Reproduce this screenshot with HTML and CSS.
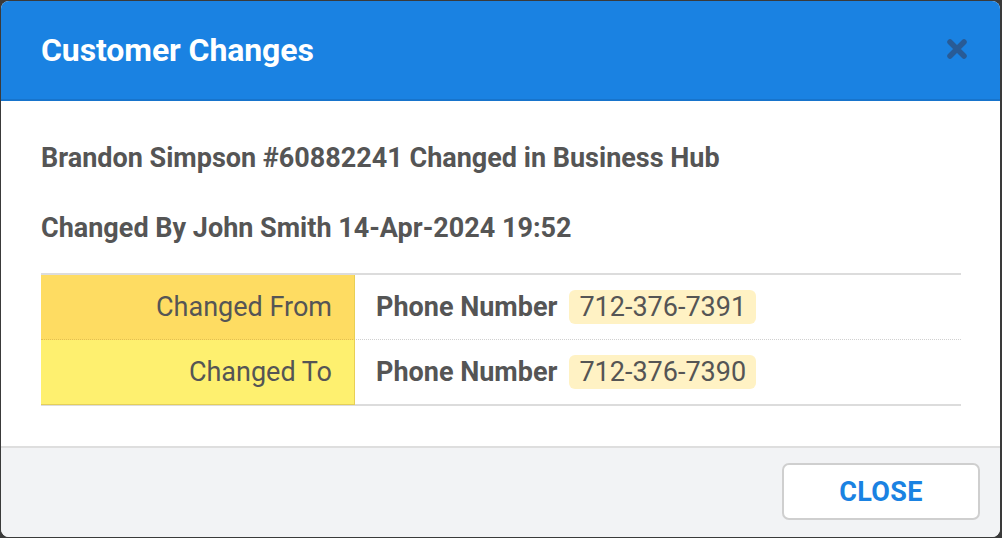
FILE: index.html
```html
<!DOCTYPE html>
<html>
<head>
<meta charset="utf-8">
<link rel="stylesheet" href="styles.css">
</head>
<body>
<div class="modal">
  <div class="modal-header">
    <h1 class="modal-title">Customer Changes</h1>
    <button class="close-x" aria-label="Close">
      <svg width="22" height="22" viewBox="0 0 22 22"><path d="M4 4 L18 18 M18 4 L4 18" stroke="currentColor" stroke-width="5.5" stroke-linecap="round"/></svg>
    </button>
  </div>
  <div class="modal-body">
    <p class="line">Brandon Simpson #60882241 Changed in Business Hub</p>
    <p class="line">Changed By John Smith 14-Apr-2024 19:52</p>
    <div class="changes">
      <div class="row row-from">
        <div class="label">Changed From</div>
        <div class="value"><span class="field">Phone Number</span><span class="pill">712-376-7391</span></div>
      </div>
      <div class="row row-to">
        <div class="label">Changed To</div>
        <div class="value"><span class="field">Phone Number</span><span class="pill">712-376-7390</span></div>
      </div>
    </div>
  </div>
  <div class="modal-footer">
    <button class="btn-close">CLOSE</button>
  </div>
</div>
</body>
</html>
```
FILE: styles.css
```css
html, body {
  margin: 0;
  padding: 0;
}
body {
  background: #3a3a3a;
  width: 1002px;
  height: 538px;
  padding: 1px 2px 1px 1px;
  box-sizing: border-box;
  font-family: Roboto, "Liberation Sans", sans-serif;
}
.modal {
  height: 536px;
  background: #fff;
  border-radius: 8px;
  overflow: hidden;
  display: flex;
  flex-direction: column;
}
.modal-header {
  background: #1a82e2;
  height: 98px;
  border-bottom: 2px solid #1774cc;
  display: flex;
  align-items: center;
  justify-content: space-between;
  padding: 0 32px 0 40px;
  flex: none;
}
.modal-title {
  margin: 0;
  color: #fff;
  font-size: 32px;
  font-weight: 700;
  letter-spacing: -0.1px;
}
.close-x {
  background: none;
  border: none;
  padding: 0;
  color: #285b96;
  display: flex;
  margin-bottom: 2px;
}
.modal-body {
  flex: 1;
  padding: 41px 39px 0 40px;
}
.line {
  margin: 0 0 38px;
  font-size: 27px;
  font-weight: 700;
  color: #555;
  line-height: 32px;
}
.line + .line {
  margin-bottom: 29px;
}
.changes {
  border-top: 2px solid #dcdcdc;
  border-bottom: 2px solid #dcdcdc;
}
.row {
  display: flex;
  height: 64px;
}
.row-from {
  border-bottom: 1px dotted #d0d0d0;
}
.label {
  width: 314px;
  flex: none;
  box-sizing: border-box;
  text-align: right;
  padding-right: 22px;
  font-size: 27px;
  color: #555;
  display: flex;
  align-items: center;
  justify-content: flex-end;
  border-right: 1px solid #e8cf55;
}
.row-from .label {
  background: #fedc62;
  border-bottom: 1px dotted #e2c050;
  margin-bottom: -1px;
}
.row-to .label {
  background: #fef06f;
  border-bottom: 1px solid #e4cf58;
  margin-bottom: -1px;
}
.value {
  display: flex;
  align-items: center;
  padding-left: 21px;
  color: #555;
}
.field {
  font-size: 27px;
  font-weight: 700;
  margin-right: 12px;
}
.pill {
  background: #fff2c4;
  border-radius: 6px;
  font-size: 27px;
  padding: 2px 10px;
  line-height: 30px;
}
.modal-footer {
  flex: none;
  background: #f2f3f5;
  border-top: 2px solid #dedede;
  display: flex;
  align-items: center;
  justify-content: flex-end;
  padding: 0 20px 2px 0;
  box-sizing: border-box;
  height: 91px;
}
.btn-close {
  width: 198px;
  height: 57px;
  background: #fff;
  border: 2px solid #cfcfcf;
  border-radius: 7px;
  color: #1a82e2;
  font-family: Roboto, "Liberation Sans", sans-serif;
  font-size: 27px;
  font-weight: 700;
  letter-spacing: 0.3px;
}
```
